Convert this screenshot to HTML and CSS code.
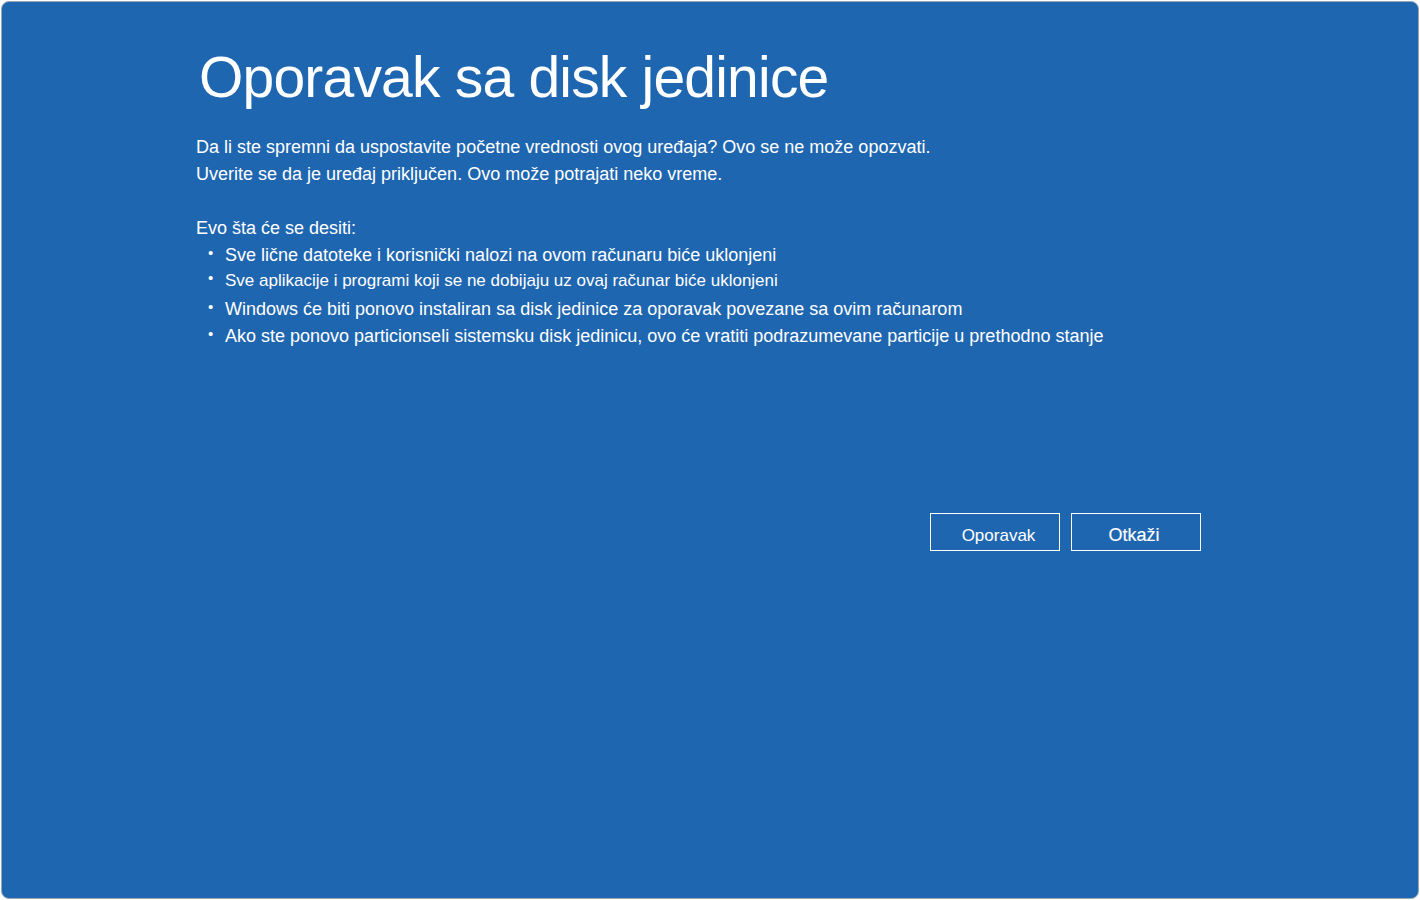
FILE: index.html
```html
<!DOCTYPE html>
<html lang="sr">
<head>
  <meta charset="UTF-8" />
  <title>Oporavak sa disk jedinice</title>
  <link rel="stylesheet" href="styles.css">
</head>
<body>
  <main class="screen">
    <section class="content">
      <h1>Oporavak sa disk jedinice</h1>
      <p class="intro">Da li ste spremni da uspostavite početne vrednosti ovog uređaja? Ovo se ne može opozvati.</p>
      <p class="intro">Uverite se da je uređaj priključen. Ovo može potrajati neko vreme.</p>

      <p class="lead">Evo šta će se desiti:</p>
      <ul class="steps">
        <li>Sve lične datoteke i korisnički nalozi na ovom računaru biće uklonjeni</li>
        <li class="small">Sve aplikacije i programi koji se ne dobijaju uz ovaj računar biće uklonjeni</li>
        <li>Windows će biti ponovo instaliran sa disk jedinice za oporavak povezane sa ovim računarom</li>
        <li>Ako ste ponovo particionseli sistemsku disk jedinicu, ovo će vratiti podrazumevane particije u prethodno stanje</li>
      </ul>

      <div class="actions">
        <button class="plain">Oporavak</button>
        <button class="strong">Otkaži</button>
      </div>
    </section>
  </main>
</body>
</html>
```

FILE: styles.css
```css
* { margin: 0; padding: 0; box-sizing: border-box; }
html, body { height: 100%; }
body {
  background: #fff;
  font-family: "Liberation Sans", Arial, sans-serif;
  color: #fff;
  padding: 1px;
}
.screen {
  height: 898px;
  background-color: #1f66b1;
  border-radius: 8px;
  border: 1px solid #9aa7b5;
}
.content {
  padding: 40px 0 0 194px;
  width: 1199px;
}
h1 {
  font-size: 57px;
  font-weight: normal;
  letter-spacing: -0.8px;
  line-height: 70px;
  margin-left: 3px;
  margin-bottom: 22px;
}
.intro {
  font-size: 18px;
  line-height: 27px;
}
.lead {
  font-size: 18px;
  line-height: 27px;
  margin-top: 27px;
}
.steps {
  list-style: none;
  margin-left: 12px;
}
.steps li {
  font-size: 18px;
  line-height: 27px;
  padding-left: 17px;
  position: relative;
}
.steps li::before {
  content: "•";
  position: absolute;
  left: 0;
  top: -3px;
  font-size: 15px;
}
.steps li.small {
  font-size: 17px;
  line-height: 23px;
  margin-bottom: 4px;
}
.actions {
  display: flex;
  justify-content: flex-end;
  gap: 11px;
  margin-top: 163px;
}
.actions button {
  width: 130px;
  height: 38px;
  padding-top: 7px;
  background: transparent;
  border: 1px solid #fff;
  color: #fff;
  font-family: "Liberation Sans", Arial, sans-serif;
  font-size: 17px;
}
.actions button.plain { padding-left: 7px; }
.actions button.strong {
  font-size: 18px;
  padding-right: 4px;
  -webkit-text-stroke: 0.15px #fff;
}
```
